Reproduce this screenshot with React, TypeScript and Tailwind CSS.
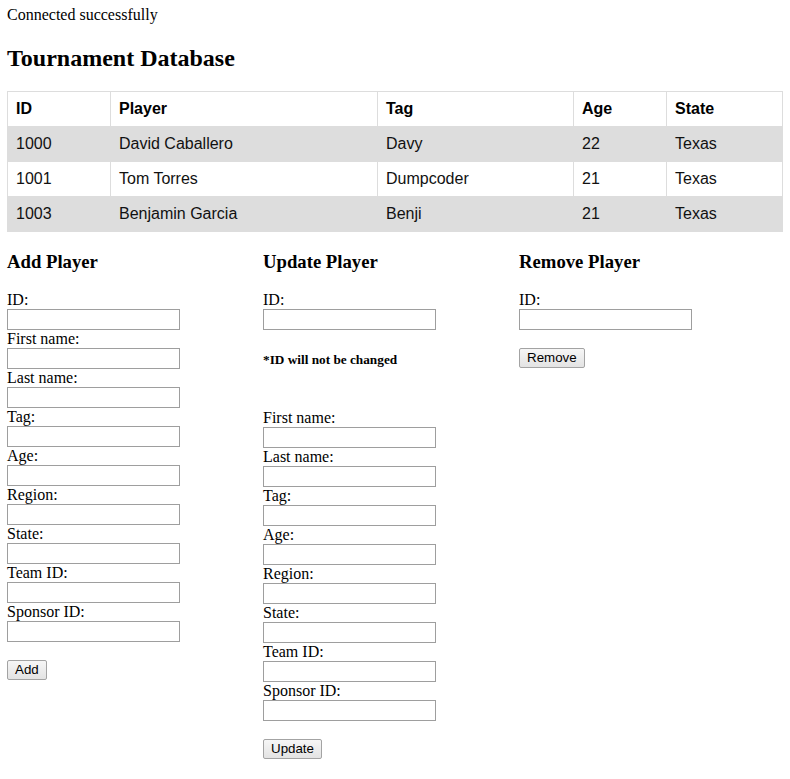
import React from "react";

const rows = [
  ["1000", "David Caballero", "Davy", "22", "Texas"],
  ["1001", "Tom Torres", "Dumpcoder", "21", "Texas"],
  ["1003", "Benjamin Garcia", "Benji", "21", "Texas"],
];

function Field({ label }: { label: string }) {
  return (
    <div>
      <div className="h-[18px] leading-[18px] text-[16px]">{label}</div>
      <input
        type="text"
        className="block w-[173px] h-[21px] border border-[#9e9e9e] bg-white px-[2px] text-[13.33px] font-['Liberation_Sans',sans-serif] outline-none"
      />
    </div>
  );
}

function Btn({ children }: { children: React.ReactNode }) {
  return (
    <button
      type="button"
      className="block h-[20px] px-[7px] border border-[#a3a3a3] rounded-[2px] bg-gradient-to-b from-[#f6f6f6] to-[#e3e3e3] text-[13.33px] leading-[18px] text-black font-['Liberation_Sans',Arial,sans-serif]"
    >
      {children}
    </button>
  );
}

function Heading({ children }: { children: React.ReactNode }) {
  return (
    <h3 className="text-[18.72px] font-bold leading-[21px] mt-[19px] mb-[19px]">{children}</h3>
  );
}

export default function App() {
  const addFields = ["ID:", "First name:", "Last name:", "Tag:", "Age:", "Region:", "State:", "Team ID:", "Sponsor ID:"];
  const updFields = ["First name:", "Last name:", "Tag:", "Age:", "Region:", "State:", "Team ID:", "Sponsor ID:"];
  return (
    <div className="pt-[6px] pl-[7px] pr-[8px] pb-[8px] text-black font-['Liberation_Serif','Times_New_Roman',serif] text-[16px] bg-white min-h-[779px]">
      <div className="leading-[18px] h-[18px]">Connected successfully</div>
      <h2 className="text-[24px] font-bold leading-[28px] mt-[20px] mb-[19px]">Tournament Database</h2>
      <table className="w-full table-fixed border-collapse font-['Liberation_Sans',Arial,sans-serif] text-[16px]">
        <colgroup>
          <col className="w-[103px]" />
          <col className="w-[267px]" />
          <col className="w-[196px]" />
          <col className="w-[93px]" />
          <col className="w-[116px]" />
        </colgroup>
        <tbody>
          <tr>
            {["ID", "Player", "Tag", "Age", "State"].map((h) => (
              <th key={h} className="border border-[#dddddd] p-[8px] text-left font-bold leading-[18px]">
                {h}
              </th>
            ))}
          </tr>
          {rows.map((r, i) => (
            <tr key={r[0]} className={i % 2 === 0 ? "bg-[#dddddd]" : "bg-white"}>
              {r.map((c, j) => (
                <td key={j} className="border border-[#dddddd] p-[8px] leading-[18px] text-[#111]">
                  {c}
                </td>
              ))}
            </tr>
          ))}
        </tbody>
      </table>

      <div className="flex">
        <div className="w-[256px]">
          <Heading>Add Player</Heading>
          {addFields.map((f) => (
            <Field key={f} label={f} />
          ))}
          <div className="h-[18px]" />
          <Btn>Add</Btn>
        </div>
        <div className="w-[256px]">
          <Heading>Update Player</Heading>
          <Field label="ID:" />
          <h5 className="text-[13.28px] font-bold leading-[15px] mt-[22px] mb-[22px]">*ID will not be changed</h5>
          <div className="h-[20px]" />
          {updFields.map((f) => (
            <Field key={f} label={f} />
          ))}
          <div className="h-[18px]" />
          <Btn>Update</Btn>
        </div>
        <div className="w-[256px]">
          <Heading>Remove Player</Heading>
          <Field label="ID:" />
          <div className="h-[18px]" />
          <Btn>Remove</Btn>
        </div>
      </div>
    </div>
  );
}
